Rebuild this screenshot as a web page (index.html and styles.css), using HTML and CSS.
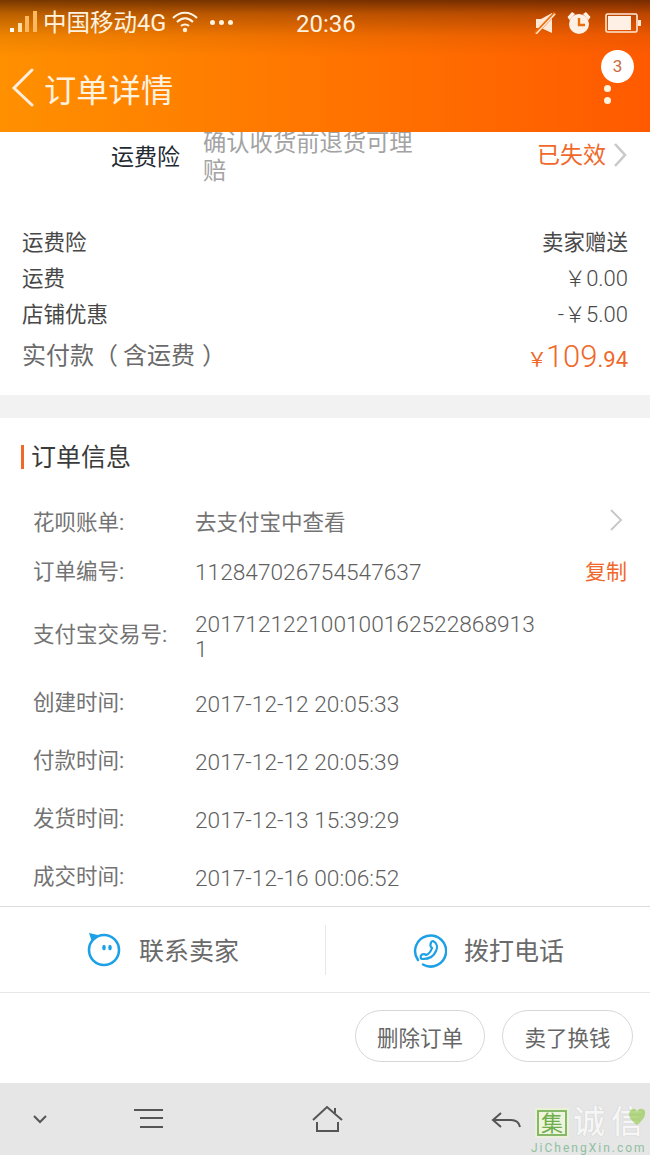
FILE: index.html
```html
<!DOCTYPE html>
<html lang="zh-CN">
<head>
<meta charset="utf-8">
<title>订单详情</title>
<link rel="stylesheet" href="styles.css">
</head>
<body>
<div class="phone">
  <header class="top">
    <div class="status">
      <div class="status-left">
        <svg class="signal" width="27" height="22" viewBox="0 0 27 22">
          <rect x="0" y="17" width="4" height="4" fill="#fff"/>
          <rect x="8" y="12" width="4" height="9" fill="#ffe0a8"/>
          <rect x="15" y="5" width="4" height="16" fill="#ffb860"/>
          <rect x="23" y="0" width="4" height="21" fill="#ffb860"/>
        </svg>
        <span class="carrier">中国移动4G</span>
        <svg class="wifi" width="26" height="22" viewBox="0 0 26 22" fill="none" stroke="#fff3e0" stroke-width="2.2">
          <path d="M1 7 C8 0 18 0 25 7"/>
          <path d="M5 11 C10 6 16 6 21 11"/>
          <path d="M9 15 C11 13 15 13 17 15"/>
          <circle cx="13" cy="19" r="2.2" fill="#fff3e0" stroke="none"/>
        </svg>
        <span class="dots"><i></i><i></i><i></i></span>
      </div>
      <div class="clock">20:36</div>
      <div class="status-right">
        <svg width="22" height="22" viewBox="0 0 22 22">
          <path d="M1 6 H6 L17 0 V20 L6 15 H1 Z" fill="#ffe8d6" transform="translate(1 1)"/>
          <path d="M1 22 L21 1" stroke="#ee6f10" stroke-width="3.4"/>
          <path d="M2 22 L21 2" stroke="#ffe8d6" stroke-width="1.4"/>
        </svg>
        <svg width="24" height="24" viewBox="0 0 24 24">
          <circle cx="12" cy="13" r="10" fill="#fff0e6"/>
          <path d="M0.5 6 L5 1 L8 3 L2.5 9 Z M23.5 6 L19 1 L16 3 L21.5 9 Z" fill="#fff0e6"/>
          <path d="M12 7 V14 H18" fill="none" stroke="#e8700c" stroke-width="2.4"/>
        </svg>
        <svg class="battery" width="36" height="20" viewBox="0 0 36 20">
          <rect x="1" y="1" width="31" height="18" rx="1.5" fill="none" stroke="#ffe8d6" stroke-width="1.6"/>
          <rect x="3" y="3" width="23" height="14" fill="#fff0e6"/>
          <rect x="33" y="7" width="3" height="6" fill="#ffe8d6"/>
        </svg>
      </div>
    </div>
    <div class="titlebar">
      <svg class="back" width="24" height="40" viewBox="0 0 24 40" fill="none" stroke="#ffeedd" stroke-width="3" stroke-linecap="round">
        <path d="M21 2 L3 20 L21 37"/>
      </svg>
      <h1 class="title">订单详情</h1>
      <div class="more">
        <span class="badge">3</span>
        <i></i><i></i>
      </div>
    </div>
  </header>

  <main class="content">
    <section class="insurance">
      <span class="ins-name">运费险</span>
      <p class="ins-desc">确认收货前退货可理赔</p>
      <span class="ins-state">已失效</span>
      <svg class="chev ins-chev" width="14" height="24" viewBox="0 0 14 24" fill="none" stroke="#c9c9c9" stroke-width="2.6"><path d="M2 1 L12 12 L2 23"/></svg>
    </section>

    <section class="fees">
      <div class="fee"><span>运费险</span><span>卖家赠送</span></div>
      <div class="fee"><span>运费</span><span class="num">￥0.00</span></div>
      <div class="fee"><span>店铺优惠</span><span class="num">-￥5.00</span></div>
      <div class="total">
        <span class="total-label">实付款<span class="paren-open">（</span>含运费<span class="paren-close">）</span></span>
        <span class="total-price"><small class="yen">￥</small>109<small>.94</small></span>
      </div>
    </section>

    <div class="gap"></div>

    <section class="order">
      <h2 class="order-head">订单信息</h2>
      <dl class="info">
        <div class="info-row r-bill"><dt>花呗账单:</dt><dd>去支付宝中查看</dd>
          <svg class="chev" width="14" height="22" viewBox="0 0 14 22" fill="none" stroke="#c9c9c9" stroke-width="2"><path d="M2 1 L12 11 L2 21"/></svg>
        </div>
        <div class="info-row r-no"><dt>订单编号:</dt><dd>112847026754547637</dd><a class="copy">复制</a></div>
        <div class="info-row r-ali"><dt>支付宝交易号:</dt><dd class="wrap">2017121221001001625228689131</dd></div>
        <div class="info-row r-time"><dt>创建时间:</dt><dd>2017-12-12 20:05:33</dd></div>
        <div class="info-row r-time"><dt>付款时间:</dt><dd>2017-12-12 20:05:39</dd></div>
        <div class="info-row r-time"><dt>发货时间:</dt><dd>2017-12-13 15:39:29</dd></div>
        <div class="info-row r-time"><dt>成交时间:</dt><dd>2017-12-16 00:06:52</dd></div>
      </dl>
    </section>
  </main>

  <section class="contact">
    <div class="contact-item">
      <svg width="36" height="36" viewBox="0 0 36 36" fill="none">
        <circle cx="18" cy="18" r="15" stroke="#1da1e6" stroke-width="2.6"/>
        <path d="M3 1 L14 3.5 L6 10 Z" fill="#1da1e6"/>
        <ellipse cx="18" cy="15.5" rx="1.8" ry="2.8" fill="#1da1e6"/>
        <ellipse cx="24" cy="15.5" rx="1.8" ry="2.8" fill="#1da1e6"/>
      </svg>
      <span>联系卖家</span>
    </div>
    <div class="contact-item with-rule">
      <svg width="36" height="36" viewBox="0 0 36 36" fill="none" stroke="#1da1e6" stroke-width="2.5" stroke-linecap="round">
        <path d="M7 28 A15.5 15.5 0 1 1 12 32.5"/>
        <path d="M22 9 C26 11 27 15 25 19 C23 24 18 27 12 27 C9 27 9 24 11 22.5 C13 21.5 14 22 15 23 C18 22 20 19 21 16 C19.5 15 19 13 20 10.5 C20.5 9.5 21 9 22 9 Z" stroke-width="2.2"/>
      </svg>
      <span>拨打电话</span>
    </div>
  </section>

  <section class="actions">
    <button class="pill">删除订单</button>
    <button class="pill">卖了换钱</button>
  </section>

  <nav class="sysbar">
    <svg class="s-down" width="14" height="9" viewBox="0 0 14 9" fill="none" stroke="#555" stroke-width="2"><path d="M1 1 L7 7 L13 1"/></svg>
    <svg class="s-menu" width="30" height="20" viewBox="0 0 30 20" fill="none" stroke="#555" stroke-width="2"><path d="M0 2 H29 M6 10 H29 M6 19 H29"/></svg>
    <svg class="s-home" width="31" height="29" viewBox="0 0 31 29" fill="none" stroke="#555" stroke-width="2"><path d="M1 16 L15 3 L30 16 M5 18 V27 H26 V18 M23 4 V9"/></svg>
    <svg class="s-back" width="30" height="20" viewBox="0 0 30 20" fill="none" stroke="#555" stroke-width="2"><path d="M10 2 L2 9 L10 16 M2 9 H20 C25 9 28 11 29 16"/></svg>
    <div class="mark">
      <div class="mark-row">
        <span class="mark-box">集</span>
        <span class="mark-word">诚信</span>
      </div>
      <span class="mark-url">JiChengXin.com</span>
      <svg class="mark-leaf" width="18" height="19" viewBox="0 0 18 19"><path d="M9 18 C1 12 0 8 2 4 C4 1 8 1 9 5 C10 1 15 1 17 4 C18 9 15 13 9 18 Z" fill="#8cc63f" opacity=".6"/></svg>
    </div>
  </nav>
</div>
</body>
</html>
```
FILE: styles.css
```css
* { box-sizing: border-box; }

html, body {
  margin: 0;
  padding: 0;
  background: #fff;
}

body {
  font-family: Roboto, "Noto Sans CJK SC", sans-serif;
}

.phone {
  width: 650px;
  height: 1155px;
  overflow: hidden;
  display: flex;
  flex-direction: column;
}

/* Orange header with the system status row */
.top {
  height: 132px;
  flex: none;
  color: #fff;
  background:
    linear-gradient(180deg, rgba(80, 30, 0, .78) 0, rgba(120, 50, 0, .5) 14px, rgba(150, 70, 0, .16) 36px, rgba(0, 0, 0, 0) 56px),
    linear-gradient(90deg, #ff9000 0, #ff7a00 40%, #ff5a00 100%);
}

.status {
  height: 44px;
  padding: 2px 9px 0 10px;
  display: flex;
  align-items: center;
  position: relative;
}

.status-left {
  display: flex;
  align-items: center;
}

.signal { margin-top: -2px; }

.carrier {
  margin-left: 6px;
  font-size: 23.5px;
  line-height: 42px;
  color: #fff3e0;
}

.wifi { margin-left: 6px; margin-top: -2px; }

.dots {
  display: flex;
  gap: 4px;
  margin-left: 12px;
  margin-top: -1px;
}

.dots i {
  width: 5px;
  height: 5px;
  border-radius: 50%;
  background: #fff3e0;
}

.clock {
  position: absolute;
  left: 296px;
  top: 10px;
  font-size: 24px;
  color: #fff3e0;
}

.status-right {
  margin-left: auto;
  display: flex;
  align-items: center;
  gap: 11px;
}

.status-right .battery { margin-left: 3px; }

.titlebar {
  height: 88px;
  padding-left: 11px;
  display: flex;
  align-items: center;
  position: relative;
}

.back { flex: none; }

.title {
  margin: -1px 0 0 9px;
  font-size: 32.3px;
  font-weight: 400;
  color: #fff3e0;
}

.more {
  position: absolute;
  left: 601px;
  top: 6px;
  width: 33px;
}

.badge {
  display: block;
  width: 33px;
  height: 33px;
  line-height: 33px;
  border-radius: 50%;
  background: #fff;
  color: #c96a3a;
  font-size: 17px;
  text-align: center;
}

.more i {
  display: block;
  width: 7px;
  height: 7px;
  margin: 5px 0 0 3px;
  border-radius: 50%;
  background: #fff3e0;
}

.more .badge + i { margin-top: 2px; }

/* Scrolled page body */
.content {
  flex: 1;
  min-height: 0;
  overflow: hidden;
}

.insurance {
  height: 80px;
  padding-left: 111px;
  display: flex;
  position: relative;
  overflow: hidden;
}

.ins-name {
  margin-top: 12px;
  font-size: 23px;
  line-height: 28px;
  color: #1f2a33;
}

.ins-desc {
  width: 222px;
  margin: -3px 0 0 23px;
  font-size: 23.3px;
  line-height: 28px;
  color: #a3a3a3;
}

.ins-state {
  margin: 10px 0 0 auto;
  padding-right: 44px;
  font-size: 23px;
  line-height: 28px;
  color: #f0682a;
}

.chev { flex: none; }

.ins-chev {
  position: absolute;
  left: 613px;
  top: 11px;
}

.fees {
  padding: 10px 22px 0;
  height: 183px;
}

.fee {
  height: 36px;
  display: flex;
  justify-content: space-between;
  align-items: center;
  font-size: 21.5px;
  color: #484848;
}

.fee .num {
  font-size: 22px;
  font-weight: 300;
  color: #484848;
}

.total {
  margin-top: 5px;
  display: flex;
  justify-content: space-between;
  align-items: center;
  height: 36px;
}

.total-label {
  font-size: 24px;
  color: #6a6a6a;
}

.paren-open { margin-right: 5px; }
.paren-close { margin-left: 7px; }

.total-price {
  margin-top: 6px;
  font-size: 31px;
  font-weight: 300;
  color: #f0682a;
}

.total-price small {
  font-size: 22px;
  font-weight: 400;
}

.total-price .yen {
  font-size: 20px;
  margin-right: -1px;
}

.gap {
  height: 23px;
  background: #f2f2f2;
}

.order {
  padding-top: 27px;
}

.order-head {
  margin: 0 0 0 21px;
  padding: 1px 0 0 7px;
  height: 24px;
  line-height: 24px;
  font-size: 25px;
  font-weight: 400;
  color: #3a3a3a;
  border-left: 3px solid #f0682a;
}

.info {
  margin: 27px 0 0;
}

.info-row {
  display: flex;
  align-items: center;
  padding-left: 33px;
  position: relative;
  font-size: 21.5px;
  color: #737373;
}

.info-row dt {
  width: 162px;
  flex: none;
}

.info-row dd {
  margin: 0;
  padding-top: 8px;
  font-size: 22.7px;
  font-weight: 300;
  line-height: 25px;
  color: #5f5f5f;
}

.r-bill dd {
  padding-top: 4px;
  font-size: 21.5px;
  font-weight: 400;
  color: #737373;
}

.r-no dd { padding-top: 6px; }

.info-row dd.wrap {
  width: 348px;
  word-break: break-all;
}

.r-bill { height: 49px; }
.r-no { height: 49px; }
.r-ali { height: 77px; }
.r-time { height: 58px; }

.r-bill .chev {
  position: absolute;
  left: 609px;
  top: 13px;
}

.copy {
  position: absolute;
  left: 585px;
  top: 10px;
  font-size: 21px;
  color: #f0682a;
}

/* Contact strip pinned above the action buttons */
.contact {
  flex: none;
  height: 87px;
  display: flex;
  border-top: 1px solid #dcdcdc;
  border-bottom: 1px solid #e8e8e8;
  background: #fff;
}

.contact-item {
  flex: 1;
  display: flex;
  align-items: center;
  justify-content: center;
  gap: 17px;
  font-size: 25px;
  color: #6a6a6a;
  position: relative;
}

.contact-item span { margin-top: -2px; }

.with-rule::before {
  content: "";
  position: absolute;
  left: 0;
  top: 18px;
  height: 50px;
  border-left: 1px solid #e8e8e8;
}

.actions {
  flex: none;
  height: 90px;
  display: flex;
  justify-content: flex-end;
  align-items: center;
  gap: 17px;
  padding: 0 17px 4px 0;
  background: #fff;
}

.pill {
  width: 130px;
  height: 52px;
  padding: 0;
  border: 1px solid #d8d8d8;
  border-radius: 26px;
  background: #fff;
  font-family: inherit;
  font-size: 21.5px;
  color: #666;
}

.pill + .pill { width: 131px; }

/* System navigation bar */
.sysbar {
  flex: none;
  height: 72px;
  background: #e6e6e6;
  position: relative;
}

.sysbar svg { position: absolute; }
.s-down { left: 33px; top: 32px; }
.s-menu { left: 134px; top: 25px; }
.s-home { left: 312px; top: 21px; }
.s-back { left: 491px; top: 28px; }

.mark {
  position: absolute;
  left: 531px;
  top: 24px;
  width: 119px;
  height: 48px;
}

.mark-row {
  display: flex;
  align-items: center;
}

.mark-box {
  width: 30px;
  height: 26px;
  margin: 1px 0 0 6px;
  line-height: 23px;
  text-align: center;
  font-size: 22px;
  color: #6fae4f;
  background: #eef5dc;
  border: 2px solid #86b86a;
  box-shadow: 0 0 0 2px #eaf1d6;
}

.mark-word {
  margin-left: 6px;
  font-size: 32px;
  font-weight: 500;
  line-height: 30px;
  letter-spacing: 6px;
  white-space: nowrap;
  color: #f6f6f6;
  text-shadow: 0 0 1px #b8b8b8;
}

.mark-url {
  display: block;
  margin: 5px 0 0 0;
  font-size: 12px;
  line-height: 13px;
  letter-spacing: 2px;
  white-space: nowrap;
  color: #8fc0a0;
}

.sysbar .mark-leaf {
  left: 97px;
  top: 0;
}
```
